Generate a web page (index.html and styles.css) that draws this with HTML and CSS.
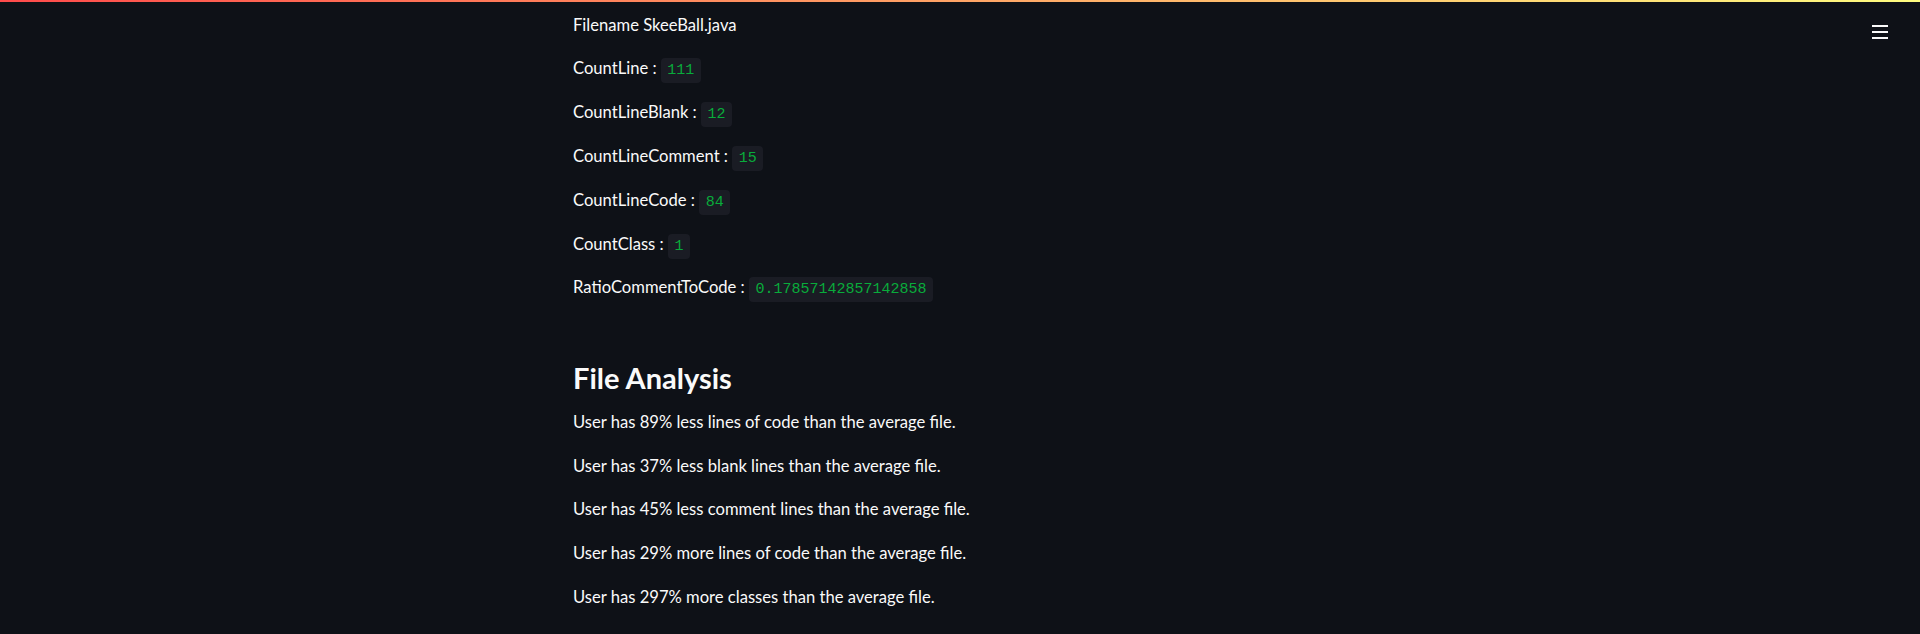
FILE: index.html
```html
<!DOCTYPE html>
<html lang="en">
<head>
  <meta charset="UTF-8">
  <meta name="viewport" content="width=device-width, initial-scale=1">
  <title>File Metrics</title>
  <link rel="stylesheet" href="styles.css">
</head>
<body>
  <div class="decoration"></div>
  <header class="toolbar">
    <button class="menu-btn" aria-label="Main menu">
      <svg width="16" height="16" viewBox="0 0 16 16">
        <rect x="0" y="1" width="16" height="2" fill="#fafafa"/>
        <rect x="0" y="7" width="16" height="2" fill="#fafafa"/>
        <rect x="0" y="13" width="16" height="2" fill="#fafafa"/>
      </svg>
    </button>
  </header>

  <main class="main">
    <p class="row">Filename SkeeBall.java</p>
    <p class="row">CountLine : <code>111</code></p>
    <p class="row">CountLineBlank : <code>12</code></p>
    <p class="row">CountLineComment : <code>15</code></p>
    <p class="row">CountLineCode : <code>84</code></p>
    <p class="row">CountClass : <code>1</code></p>
    <p class="row">RatioCommentToCode : <code>0.17857142857142858</code></p>

    <h2>File Analysis</h2>
    <p class="row">User has 89% less lines of code than the average file.</p>
    <p class="row">User has 37% less blank lines than the average file.</p>
    <p class="row">User has 45% less comment lines than the average file.</p>
    <p class="row">User has 29% more lines of code than the average file.</p>
    <p class="row">User has 297% more classes than the average file.</p>
    <p class="row">User has 60% higher ratio of comment to code lines than the average file.</p>
  </main>
</body>
</html>
```

FILE: styles.css
```css
body {
  margin: 0;
  background: #0e1117;
  color: #fafafa;
  font-family: Lato, "Source Sans Pro", sans-serif;
  font-size: 16.6px;
  overflow: hidden;
}
.decoration {
  position: fixed;
  top: 0;
  left: 0;
  right: 0;
  height: 2px;
  background: linear-gradient(90deg, #ff4b4b, #fffd80);
  z-index: 10;
}
.toolbar {
  position: fixed;
  top: 0;
  right: 0;
  padding: 24px 32px 0 0;
}
.menu-btn {
  display: block;
  width: 16px;
  height: 16px;
  padding: 0;
  border: none;
  background: none;
  cursor: pointer;
}
.menu-btn svg {
  display: block;
}
.main {
  width: 774px;
  margin: 0 auto;
  padding-top: 12.6px;
}
.row {
  margin: 0 0 18.8px;
  height: 25px;
  line-height: 25px;
  white-space: nowrap;
}
code {
  display: inline-block;
  padding: 0 6.5px;
  line-height: 25px;
  border-radius: 4px;
  background: #1a1c24;
  color: #09ab3b;
  font-family: "Liberation Mono", "DejaVu Sans Mono", monospace;
  font-size: 15px;
}
h2 {
  margin: 60.2px 0 14.4px;
  font-size: 29px;
  line-height: 34.8px;
  font-weight: 700;
}
```
